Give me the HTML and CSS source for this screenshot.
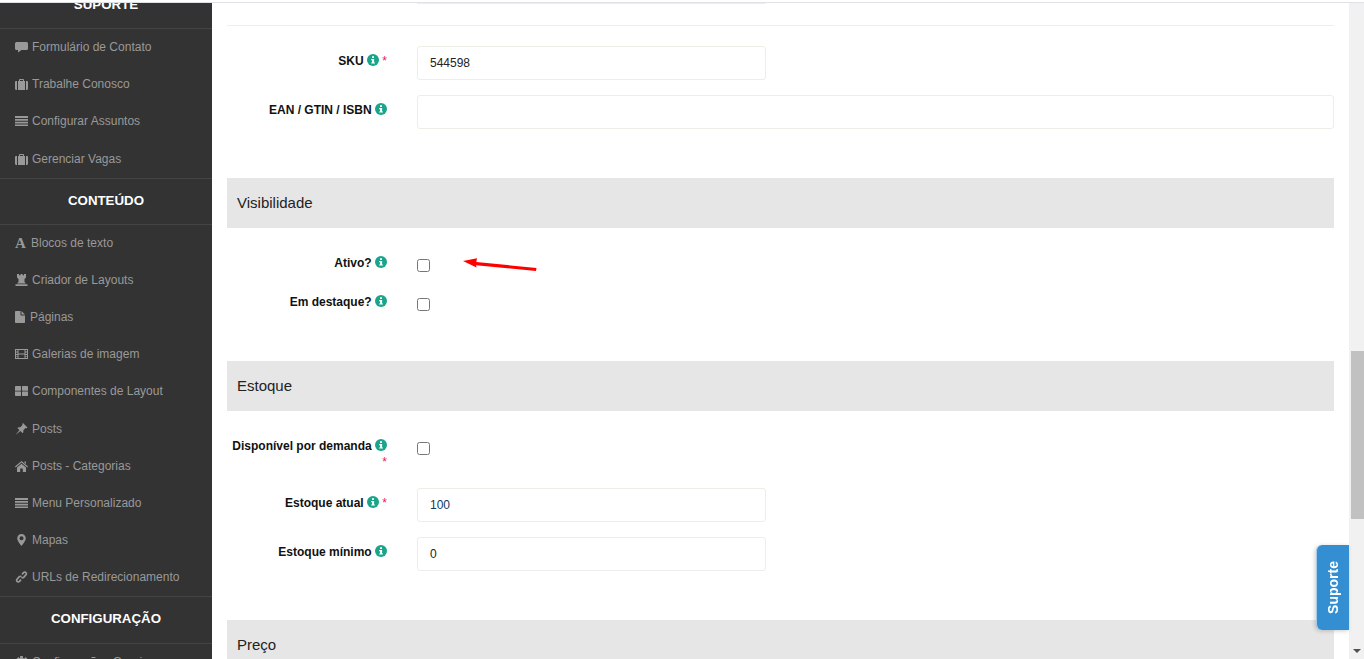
FILE: index.html
```html
<!DOCTYPE html>
<html lang="pt">
<head>
<meta charset="utf-8">
<title>Produto</title>
<link rel="stylesheet" href="styles.css">
</head>
<body>
<svg class="defs" width="0" height="0" aria-hidden="true">
  <symbol id="i-info" viewBox="0 0 12 12"><circle cx="6" cy="6" r="6" fill="#1aa58b"/><path fill="#fff" d="M5 2.3h2v1.6H5zM4.2 5h2.9v3.4h.8v1.2H4.200V8.400h.9V6.200h-.9z"/></symbol>
  <symbol id="i-comment" viewBox="0 0 13 12"><path d="M1.500 1h10A1.500 1.500 0 0 1 13 2.500v5A1.500 1.500 0 0 1 11.500 9H6.500L3 11.500V9H1.500A1.500 1.500 0 0 1 0 7.500v-5A1.500 1.500 0 0 1 1.500 1z"/></symbol>
  <symbol id="i-case" viewBox="0 0 13 12"><path d="M4 3V1.800C4 1.300 4.400 1 4.800 1h3.400c.4 0 .8.300.8.800V3h-1V2H5v1zM0 4.200C0 3.500.5 3 1.200 3H2v9h-.8C.5 12 0 11.500 0 10.800zM3 3h7v9H3zM11 3h.8c.7 0 1.200.5 1.200 1.200v6.600c0 .7-.5 1.200-1.200 1.200H11z"/></symbol>
  <symbol id="i-list" viewBox="0 0 13 12"><path d="M0 1h13v2H0zM0 4h13v1.700H0zM0 6.700h13v1.700H0zM0 9.400h13V11H0z"/></symbol>
  <symbol id="i-rook" viewBox="0 0 12 12"><path d="M1.500 0h2v1.200h1.500V0h2v1.200h1.500V0h2v3.500L9 5v3l1.500 1.500h-9L3 8V5L1.500 3.500zM0 10.300h12V12H0z"/></symbol>
  <symbol id="i-file" viewBox="0 0 10 12"><path d="M0 .8C0 .4.300 0 .8 0H5.500v3.600c0 .5.400.9.900.9H10v6.700c0 .4-.3.800-.8.800H.8c-.5 0-.8-.4-.8-.8zM6.500 0 10 3.500H6.500z"/></symbol>
  <symbol id="i-film" viewBox="0 0 13 12"><path fill-rule="evenodd" d="M0 1h13v10H0zM1 2v1.500h1.500V2zM1 4.500V6h1.500V4.500zM1 7v1.500h1.500V7zM1 9v1h1.500V9zM3.500 2v3.500h6V2zM3.500 6.500V10h6V6.500zM10.500 2v1.500H12V2zM10.500 4.500V6H12V4.500zM10.500 7v1.500H12V7zM10.500 9v1H12V9z"/></symbol>
  <symbol id="i-grid" viewBox="0 0 13 12"><path d="M0 2c0-.6.400-1 1-1h4.500c.3 0 .5.200.5.500v3.700c0 .3-.2.500-.5.500H0zM7 1.500c0-.3.200-.5.500-.5H12c.6 0 1 .4 1 1v3.700H7.500c-.3 0-.5-.2-.5-.5zM0 6.500h5.500c.3 0 .5.200.5.500v3.500c0 .3-.2.500-.5.500H1c-.6 0-1-.4-1-1zM7.500 6.500H13V10c0 .6-.4 1-1 1H7.500c-.3 0-.5-.2-.5-.5V7c0-.3.200-.5.500-.5z"/></symbol>
  <symbol id="i-pin" viewBox="0 0 12 12"><path d="M7.500 0 12 4.500l-1 .7-.9-.3-2.300 2.400c.3 1.100.1 2.100-.6 2.900L4.900 7.900 0 12 4 7.100 1.800 4.900c.8-.7 1.800-.9 2.900-.6L7 2l-.3-.9z"/></symbol>
  <symbol id="i-home" viewBox="0 0 13 12"><path d="M6.500 1 13 6.600l-.7.800L6.500 2.500.7 7.400 0 6.600zM2 7.500 6.500 3.700 11 7.500V12H7.800V8.500H5.200V12H2zM9.500 1.500H11v2.400L9.500 2.700z"/></symbol>
  <symbol id="i-marker" viewBox="0 0 10 14"><path fill-rule="evenodd" d="M5 0a5 5 0 0 1 5 5c0 3-3.500 7-5 9C3.500 12 0 8 0 5a5 5 0 0 1 5-5zm0 2.600A2.400 2.400 0 1 0 5 7.400 2.400 2.400 0 0 0 5 2.600z"/></symbol>
  <symbol id="i-link" viewBox="0 0 12 13"><path fill="none" stroke="currentColor" stroke-width="1.800" d="M6.600 3.600 8.200 1.800c.8-.8 2-.8 2.600-.1.700.7.700 1.900-.1 2.600L8.600 6.600c-.8.800-1.900.8-2.600.2M5.400 9.400 3.800 11.200c-.8.800-2 .8-2.600.1-.7-.7-.7-1.900.1-2.600l2.100-2.300c.8-.8 1.900-.8 2.600-.2"/></symbol>
  <symbol id="i-cog" viewBox="0 0 13 13"><path d="M5 0h3v2l1.500.6L11 1.200 13 3.300 11.500 5l.5 1.500h1v3h-2l-.5 1.200 1.400 1.400-2 1.900H2L1 11.500l1.400-1.400L2 9H0V6h2l.5-1.500L1 3.200 3.200 1 4.500 2.400 5 2z"/></symbol>
</svg>

<div class="topline"></div>
<div class="layout">
  <aside class="sidebar">
    <div class="sidebar-inner">
      <h3 class="side-title side-title-first">SUPORTE</h3>
      <ul class="side-list side-list-first">
        <li class="side-item"><svg class="ic"><use href="#i-comment"/></svg>Formulário de Contato</li>
        <li class="side-item"><svg class="ic"><use href="#i-case"/></svg>Trabalhe Conosco</li>
        <li class="side-item"><svg class="ic"><use href="#i-list"/></svg>Configurar Assuntos</li>
        <li class="side-item"><svg class="ic"><use href="#i-case"/></svg>Gerenciar Vagas</li>
      </ul>
      <h3 class="side-title">CONTEÚDO</h3>
      <ul class="side-list">
        <li class="side-item"><span class="ic ic-a">A</span>Blocos de texto</li>
        <li class="side-item"><svg class="ic"><use href="#i-rook"/></svg>Criador de Layouts</li>
        <li class="side-item"><svg class="ic ic-narrow"><use href="#i-file"/></svg>Páginas</li>
        <li class="side-item"><svg class="ic"><use href="#i-film"/></svg>Galerias de imagem</li>
        <li class="side-item"><svg class="ic"><use href="#i-grid"/></svg>Componentes de Layout</li>
        <li class="side-item"><svg class="ic"><use href="#i-pin"/></svg>Posts</li>
        <li class="side-item"><svg class="ic"><use href="#i-home"/></svg>Posts - Categorias</li>
        <li class="side-item"><svg class="ic"><use href="#i-list"/></svg>Menu Personalizado</li>
        <li class="side-item"><svg class="ic"><use href="#i-marker"/></svg>Mapas</li>
        <li class="side-item"><svg class="ic"><use href="#i-link"/></svg>URLs de Redirecionamento</li>
      </ul>
      <h3 class="side-title side-title-last">CONFIGURAÇÃO</h3>
      <ul class="side-list">
        <li class="side-item"><svg class="ic"><use href="#i-cog"/></svg>Configurações Gerais</li>
      </ul>
    </div>
  </aside>

  <main class="content">
    <div class="clipped-input"></div>
    <hr class="rule">

    <div class="row row-input">
      <label class="lbl">SKU <svg class="info"><use href="#i-info"/></svg> <span class="req">*</span></label>
      <input class="field field-half" type="text" value="544598">
    </div>
    <div class="row row-input">
      <label class="lbl">EAN / GTIN / ISBN <svg class="info"><use href="#i-info"/></svg></label>
      <input class="field" type="text">
    </div>

    <h4 class="band band-tight">Visibilidade</h4>
    <div class="row">
      <label class="lbl">Ativo? <svg class="info"><use href="#i-info"/></svg></label>
      <input class="check" type="checkbox">
      <div class="arrow-wrap">
        <svg class="arrow" width="74" height="15" viewBox="0 0 74 15"><path fill="#f00" d="M0 4 14 1.200 13.300 5 73.500 11 73 14 13 8.200 13.500 10.500z"/></svg>
      </div>
    </div>
    <div class="row">
      <label class="lbl">Em destaque? <svg class="info"><use href="#i-info"/></svg></label>
      <input class="check" type="checkbox">
    </div>

    <h4 class="band">Estoque</h4>
    <div class="row row-double">
      <label class="lbl">Disponível por demanda <svg class="info"><use href="#i-info"/></svg> <span class="req">*</span></label>
      <input class="check" type="checkbox">
    </div>
    <div class="row row-input">
      <label class="lbl">Estoque atual <svg class="info"><use href="#i-info"/></svg> <span class="req">*</span></label>
      <input class="field field-half field-blue" type="text" value="100">
    </div>
    <div class="row row-input">
      <label class="lbl">Estoque mínimo <svg class="info"><use href="#i-info"/></svg></label>
      <input class="field field-half" type="text" value="0">
    </div>

    <h4 class="band band-tight">Preço</h4>
  </main>

  <div class="scrollbar">
    <div class="scroll-thumb"></div>
    <div class="scroll-arrow"></div>
  </div>
</div>
<button class="support" type="button"><span>Suporte</span></button>
</body>
</html>
```
FILE: styles.css
```css
* { box-sizing: border-box; }
html, body { margin: 0; height: 659px; overflow: hidden; background: #fff; }
body { font-family: "Liberation Sans", Arial, sans-serif; font-size: 12px; color: #111; }
.defs { display: block; height: 0; }

.topline { height: 3px; border-bottom: 1px solid #dfe2e4; }
.layout { display: flex; height: 656px; overflow: hidden; }

/* sidebar */
.sidebar { width: 212px; flex: none; background: #333; overflow: hidden; }
.sidebar-inner { margin-top: -20px; }
.side-title {
  margin: 0; height: 47px; line-height: 44.400px; text-align: center;
  font-size: 13.300px; font-weight: 700; color: #fff;
  border-top: 1px solid #444; border-bottom: 1px solid #444;
}
.side-title-first { border-top: 0; height: 46px; line-height: 44px; }
.side-title-last { height: 47.600px; }
.side-list { list-style: none; margin: 0; padding: 0; }
.side-list-first .side-item:last-child { margin-top: .5px; }
.side-item {
  display: flex; align-items: center; height: 37.140px; padding: 0 0 1.340px 15px;
  color: #999; font-size: 12px; white-space: nowrap;
}
.ic { width: 13px; height: 12px; margin-right: 4px; fill: #999; color: #999; flex: none; }
.ic-narrow { width: 10px; margin-right: 5px; }
.ic-a { font: 700 15px/12px "Liberation Serif", serif; margin-right: 3px; }

/* content */
.content { flex: 1; min-width: 0; padding: 0 15px; overflow: hidden; }
.clipped-input {
  margin-left: 190px; width: 349px; height: 1px;
  border: 1px solid #eeeee8; border-top: 0; border-radius: 0 0 3px 3px;
}
.rule { margin: 21px 0 20px; border: 0; border-top: 1px solid #eee; }
.row { display: flex; margin-bottom: 15px; min-height: 24px; }
.row-input { min-height: 34px; }
.row-double { margin-bottom: 17px; }
.lbl {
  width: 160px; margin-right: 30px; padding: 7px 0 1px 5px; text-align: right;
  font-weight: 700; font-size: 12px; line-height: 16px; color: #111;
}
.info { display: inline-block; width: 12px; height: 12px; vertical-align: -1px; }
.req { color: #e6195c; font-weight: 400; }
.field {
  flex: 1; min-width: 0; height: 34px; padding: 0 12px;
  border: 1px solid #eeeee8; border-radius: 3px; background: #fff;
  font: 12px "Liberation Sans", Arial, sans-serif; color: #222;
}
.field-half { flex: none; width: 349px; }
.field-blue { color: #12365c; }
.check { width: 13px; height: 13px; margin: 11px 0 0; flex: none; }
.arrow-wrap { margin: 9px 0 0 33px; }
.arrow { display: block; }

.band {
  margin: 50px 0 20px; height: 50px; line-height: 49px; padding-left: 10px;
  background: #e6e6e6; font-size: 15px; font-weight: 400; color: #222;
}
.band-tight { margin-top: 49px; }

/* scrollbar */
.scrollbar { width: 15px; flex: none; background: #f1f1f1; display: flex; flex-direction: column; align-items: flex-end; }
.scroll-thumb { width: 13px; height: 168px; margin-top: 348px; background: #c1c1c1; }
.scroll-arrow {
  margin: 130px 3px 0 0; width: 0; height: 0;
  border-left: 4px solid transparent; border-right: 4px solid transparent; border-top: 4px solid #505050;
}

/* floating tab */
.support {
  position: fixed; left: 1316px; top: 545px; width: 33px; height: 85px; padding: 0;
  display: flex; align-items: center; justify-content: center;
  border: 0; border-left: 1px solid #a9cbe6; border-radius: 6px 0 0 6px;
  background: #348fd2; color: #fff; font: 700 14px "Liberation Sans", Arial, sans-serif;
  box-shadow: -1px 1px 4px rgba(0,0,0,.2);
}
.support span { writing-mode: vertical-rl; transform: rotate(180deg); }
```
